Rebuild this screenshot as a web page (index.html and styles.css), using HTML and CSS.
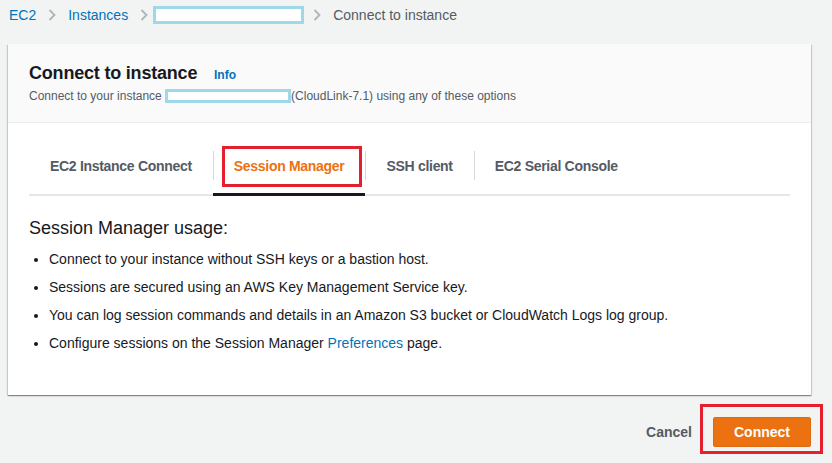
FILE: index.html
```html
<!DOCTYPE html>
<html lang="en">
<head>
    <meta charset="UTF-8">
    <meta name="viewport" content="width=device-width, initial-scale=1.0">
    <title>Connect to instance</title>
    <link rel="stylesheet" href="styles.css">
</head>
<body>

    <nav class="breadcrumbs">
        <a href="#" class="crumb">EC2</a>
        <svg class="chevron" width="8" height="12" viewBox="0 0 8 12"><polyline points="1.5,1 6.5,6 1.5,11" fill="none" stroke="#aab7b8" stroke-width="1.8"/></svg>
        <a href="#" class="crumb">Instances</a>
        <svg class="chevron" width="8" height="12" viewBox="0 0 8 12"><polyline points="1.5,1 6.5,6 1.5,11" fill="none" stroke="#aab7b8" stroke-width="1.8"/></svg>
        <span class="redacted crumb-box"></span>
        <svg class="chevron" width="8" height="12" viewBox="0 0 8 12"><polyline points="1.5,1 6.5,6 1.5,11" fill="none" stroke="#aab7b8" stroke-width="1.8"/></svg>
        <span class="current">Connect to instance</span>
    </nav>

    <div class="card">
        <div class="card-header">
            <h2>Connect to instance <a href="#" class="info">Info</a></h2>
            <p class="subtitle">Connect to your instance <span class="redacted id-box"></span>(CloudLink-7.1) using any of these options</p>
        </div>

        <div class="card-body">
            <ul class="tabs">
                <li class="tab">EC2 Instance Connect</li>
                <li class="tab active"><span class="mark"></span>Session Manager</li>
                <li class="tab">SSH client</li>
                <li class="tab">EC2 Serial Console</li>
            </ul>

            <h3>Session Manager usage:</h3>
            <ul class="usage">
                <li>Connect to your instance without SSH keys or a bastion host.</li>
                <li>Sessions are secured using an AWS Key Management Service key.</li>
                <li>You can log session commands and details in an Amazon S3 bucket or CloudWatch Logs log group.</li>
                <li>Configure sessions on the Session Manager <a href="#">Preferences</a> page.</li>
            </ul>
        </div>
    </div>

    <div class="actions">
        <a href="#" class="cancel">Cancel</a>
        <div class="btn-frame">
            <button class="btn">Connect</button>
        </div>
    </div>

</body>
</html>
```

FILE: styles.css
```css
body {
    font-family: "Liberation Sans", Arial, sans-serif;
    font-size: 14px;
    color: #16191f;
    background-color: #f2f3f3;
    margin: 0;
    padding: 0;
}

a {
    color: #0073bb;
    text-decoration: none;
}

.breadcrumbs {
    display: flex;
    align-items: center;
    height: 30px;
    padding: 0 9px;
    line-height: 20px;
}

.chevron {
    margin: 0 12px;
}

.current {
    color: #545b64;
}

.redacted {
    display: inline-block;
    box-sizing: border-box;
    background-color: white;
    border: 3px solid #9fd8e8;
}

.crumb-box {
    width: 151px;
    height: 18px;
    margin: 0 -3px 0 -7px;
}

.card {
    margin: 14px 21px 0 8px;
    background-color: white;
    box-shadow: 0 1px 1px 0 rgba(0, 28, 36, 0.3), 1px 1px 1px 0 rgba(0, 28, 36, 0.15), -1px 1px 1px 0 rgba(0, 28, 36, 0.15);
}

.card-header {
    background-color: #fafafa;
    border-bottom: 1px solid #eaeded;
    padding: 18px 21px 18px;
}

.card-header h2 {
    margin: 0;
    font-size: 18px;
    line-height: 22px;
    font-weight: bold;
    letter-spacing: -0.2px;
}

.info {
    font-size: 12px;
    font-weight: bold;
    letter-spacing: 0;
    margin-left: 12px;
}

.subtitle {
    margin: 2px 0 0;
    font-size: 12px;
    line-height: 16px;
    color: #545b64;
}

.id-box {
    width: 126px;
    height: 14px;
    vertical-align: -3px;
}

.card-body {
    padding: 20px 21px 42px;
}

.tabs {
    display: flex;
    list-style: none;
    margin: 0;
    padding: 0;
    border-bottom: 2px solid #e4e7e8;
}

.tab {
    position: relative;
    padding: 13px 21px 18px;
    line-height: 20px;
    font-weight: bold;
    letter-spacing: -0.3px;
    color: #545b64;
}

.tab + .tab::before {
    content: "";
    position: absolute;
    left: 0;
    top: 8px;
    height: 29px;
    border-left: 1px solid #d5dbdb;
}

.tab.active {
    color: #ec7211;
}

.tab.active::after {
    content: "";
    position: absolute;
    left: 0;
    right: 0;
    bottom: -2px;
    height: 3px;
    background-color: #16191f;
}

.mark {
    position: absolute;
    left: 9px;
    right: 3px;
    top: 3px;
    bottom: 7px;
    border: 3px solid #e5202e;
}

h3 {
    margin: 20px 0 9px;
    font-size: 18px;
    line-height: 24px;
    font-weight: normal;
}

.usage {
    margin: 0;
    padding-left: 20px;
}

.usage li {
    line-height: 20px;
    margin-bottom: 8px;
}

.usage li:last-child {
    margin-bottom: 0;
}

.actions {
    display: flex;
    justify-content: flex-end;
    align-items: center;
    margin-top: 9px;
    padding-right: 9px;
}

.cancel {
    color: #545b64;
    font-weight: bold;
    margin: 5px 8px 0 0;
}

.btn-frame {
    border: 3px solid #e5202e;
    padding: 10px 9px 4px 10px;
}

.btn {
    display: block;
    width: 98px;
    height: 30px;
    font-family: inherit;
    font-size: 14px;
    font-weight: bold;
    color: white;
    background-color: #ec7211;
    border: 1px solid #dd6b10;
    border-radius: 2px;
}
```
